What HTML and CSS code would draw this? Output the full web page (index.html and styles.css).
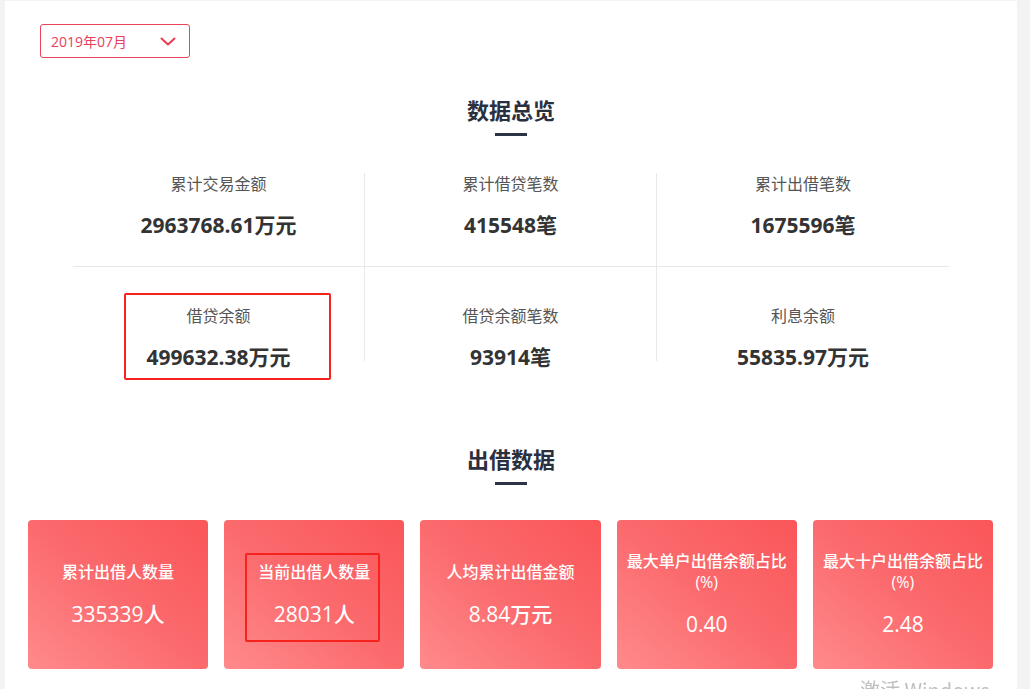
FILE: index.html
```html
<!DOCTYPE html>
<html lang="zh-CN">
<head>
    <meta charset="UTF-8">
    <title>数据总览</title>
    <link rel="stylesheet" href="styles.css">
</head>
<body>
    <div class="panel">
        <div class="month-select">
            <span>2019年07月</span>
            <svg class="chevron" width="16" height="10" viewBox="0 0 16 10">
                <path d="M1.5 1.5 L8 7.5 L14.5 1.5" fill="none" stroke="#e83c52" stroke-width="2" stroke-linecap="round" stroke-linejoin="round"/>
            </svg>
        </div>

        <div class="section-title first">
            <h2>数据总览</h2>
            <i class="bar"></i>
        </div>

        <div class="stats">
            <div class="cell">
                <p class="label">累计交易金额</p>
                <p class="value">2963768.61万元</p>
            </div>
            <div class="cell">
                <p class="label">累计借贷笔数</p>
                <p class="value">415548笔</p>
            </div>
            <div class="cell">
                <p class="label">累计出借笔数</p>
                <p class="value">1675596笔</p>
            </div>
            <div class="cell bottom">
                <p class="label">借贷余额</p>
                <p class="value">499632.38万元</p>
                <div class="mark mark-balance"></div>
            </div>
            <div class="cell bottom">
                <p class="label">借贷余额笔数</p>
                <p class="value">93914笔</p>
            </div>
            <div class="cell bottom">
                <p class="label">利息余额</p>
                <p class="value">55835.97万元</p>
            </div>
        </div>

        <div class="section-title second">
            <h2>出借数据</h2>
            <i class="bar"></i>
        </div>

        <div class="cards">
            <div class="card">
                <p class="card-label">累计出借人数量</p>
                <p class="card-value">335339人</p>
            </div>
            <div class="card">
                <p class="card-label">当前出借人数量</p>
                <p class="card-value">28031人</p>
                <div class="mark mark-lenders"></div>
            </div>
            <div class="card">
                <p class="card-label">人均累计出借金额</p>
                <p class="card-value">8.84万元</p>
            </div>
            <div class="card">
                <p class="card-label">最大单户出借余额占比<br>(%)</p>
                <p class="card-value">0.40</p>
            </div>
            <div class="card">
                <p class="card-label">最大十户出借余额占比<br>(%)</p>
                <p class="card-value">2.48</p>
            </div>
        </div>
    </div>

    <div class="watermark">激活 Windows</div>
</body>
</html>
```

FILE: styles.css
```css
* {
    margin: 0;
    padding: 0;
    box-sizing: border-box;
}

body {
    font-family: 'Open Sans', 'Noto Sans CJK SC', sans-serif;
    background: #f3f3f3;
    padding: 1px 13px 0 5px;
    height: 689px;
    overflow: hidden;
}

.panel {
    background: #ffffff;
    min-height: 700px;
    padding: 23px 0 0;
    position: relative;
}

/* month dropdown */
.month-select {
    margin-left: 35px;
    width: 150px;
    height: 34px;
    border: 1px solid #e8455a;
    border-radius: 3px;
    display: flex;
    align-items: center;
    justify-content: space-between;
    padding: 0 13px 0 10px;
    color: #e8405a;
    font-size: 14px;
}

.chevron {
    display: block;
    margin-top: 1px;
}

/* section titles */
.section-title {
    display: flex;
    flex-direction: column;
    align-items: center;
}

.section-title.first {
    margin-top: 38px;
}

.section-title.second {
    margin-top: 84px;
}

.section-title h2 {
    font-size: 22px;
    line-height: 28px;
    font-weight: 700;
    color: #2a3040;
}

.section-title .bar {
    display: block;
    width: 32px;
    height: 3px;
    margin-top: 9px;
    background: #2c3344;
}

/* overview grid */
.stats {
    width: 876px;
    margin: 37px auto 0;
    display: grid;
    grid-template-columns: repeat(3, 1fr);
}

.cell {
    height: 94px;
    text-align: center;
    position: relative;
}

.cell:nth-child(3n+1),
.cell:nth-child(3n+2) {
    border-right: 1px solid #e8e8e8;
}

.cell:nth-child(-n+3) {
    border-bottom: 1px solid #e8e8e8;
}

.cell.bottom {
    padding-top: 38px;
}

.label {
    font-size: 16px;
    line-height: 22px;
    color: #555;
}

.value {
    margin-top: 16px;
    font-size: 21px;
    line-height: 28px;
    font-weight: 700;
    color: #333;
}

/* lender cards */
.cards {
    display: flex;
    gap: 16px;
    padding: 0 24px 0 23px;
    margin-top: 35px;
}

.card {
    flex: 1;
    height: 149px;
    border-radius: 4px;
    background: linear-gradient(to top right, #ff8a8b 0%, #fb6a6d 50%, #fa5659 100%);
    color: #fff;
    display: flex;
    flex-direction: column;
    align-items: center;
    justify-content: center;
    text-align: center;
    position: relative;
}

.card-label {
    font-size: 16px;
    line-height: 21px;
    font-weight: 500;
}

.card-value {
    margin-top: 17px;
    font-size: 21px;
    line-height: 28px;
    font-weight: 500;
}

/* red annotation boxes */
.mark {
    position: absolute;
    border: 2px solid #f5221d;
    border-radius: 2px;
}

.mark-balance {
    left: 51px;
    top: 26px;
    width: 207px;
    height: 87px;
}

.mark-lenders {
    left: 21px;
    top: 33px;
    width: 135px;
    height: 89px;
}

.watermark {
    position: fixed;
    left: 860px;
    top: 675px;
    font-size: 20px;
    color: #bfbfbf;
    font-family: 'Noto Sans CJK SC', sans-serif;
}
```
